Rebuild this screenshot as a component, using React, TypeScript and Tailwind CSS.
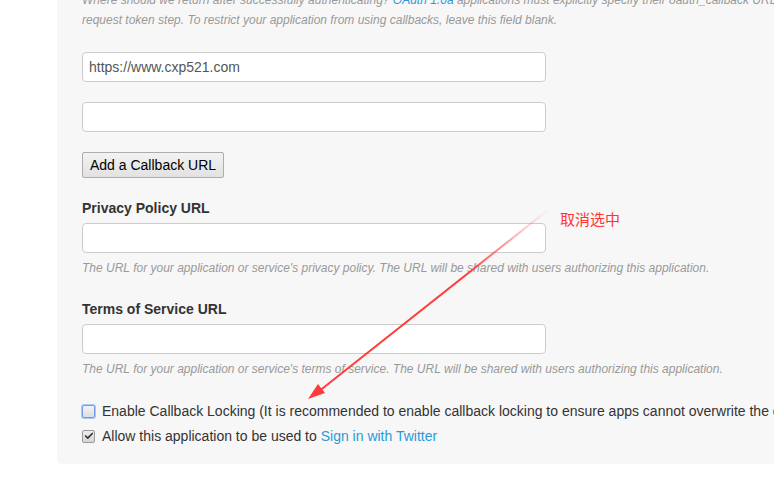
import { Check } from "lucide-react";

const font = { fontFamily: '"Liberation Sans", Arial, sans-serif' };

function Field({ value }: { value?: string }) {
  return (
    <div className="w-[464px] h-[30px] bg-white border border-[#cccccc] rounded-[4px] px-[6px] flex items-center text-[14px] text-[#555555]">
      {value}
    </div>
  );
}

function Help({ children }: { children: React.ReactNode }) {
  return <p className="text-[12px] leading-[20px] italic text-[#999999] whitespace-nowrap">{children}</p>;
}

export default function App() {
  return (
    <div style={font} className="relative w-[774px] h-[489px] overflow-hidden bg-white">
      <div className="ml-[57px] w-[760px] h-[464px] bg-[#f7f7f7] rounded-bl-[5px] pl-[25px] flex flex-col">
        <div className="-mt-[10px]">
          <Help>
            Where should we return after successfully authenticating?{" "}
            <span className="text-[#2a9ad6]">OAuth 1.0a</span> applications must explicitly specify their
            oauth_callback URL on the
          </Help>
          <Help>request token step. To restrict your application from using callbacks, leave this field blank.</Help>
        </div>

        <div className="mt-[22px] flex flex-col gap-[20px]">
          <Field value="https://www.cxp521.com" />
          <Field />
        </div>

        <button className="mt-[20px] self-start h-[26px] px-[7px] text-[14px] text-black border border-[#adadad] rounded-[2px] bg-gradient-to-b from-[#f2f2f2] to-[#e2e2e2]">
          Add a Callback URL
        </button>

        <label className="mt-[20px] text-[14px] font-bold text-[#333333] leading-[20px]">Privacy Policy URL</label>
        <div className="mt-[5px]">
          <Field />
        </div>
        <div className="mt-[5px]">
          <Help>
            The URL for your application or service's privacy policy. The URL will be shared with users authorizing
            this application.
          </Help>
        </div>

        <label className="mt-[21px] text-[14px] font-bold text-[#333333] leading-[20px]">Terms of Service URL</label>
        <div className="mt-[5px]">
          <Field />
        </div>
        <div className="mt-[5px]">
          <Help>
            The URL for your application or service's terms of service. The URL will be shared with users authorizing
            this application.
          </Help>
        </div>

        <div className="mt-[22px] flex flex-col gap-[5px] text-[14px] text-[#333333] whitespace-nowrap">
          <div className="flex items-center gap-[7px] h-[20px]">
            <span className="shrink-0 w-[13px] h-[13px] rounded-[2px] border border-[#6f9de8] shadow-[0_0_0_1px_#a9c6f5] bg-gradient-to-b from-[#f4f4f4] to-[#dedede]" />
            <span>
              Enable Callback Locking (It is recommended to enable callback locking to ensure apps cannot overwrite the
              callback url)
            </span>
          </div>
          <div className="flex items-center gap-[7px] h-[20px]">
            <span className="shrink-0 w-[13px] h-[13px] rounded-[2px] border border-[#9a9a9a] bg-gradient-to-b from-[#ededed] to-[#d6d6d6] flex items-center justify-center">
              <Check size={10} strokeWidth={4} className="text-[#333333]" />
            </span>
            <span>
              Allow this application to be used to <span className="text-[#2a9ad6]">Sign in with Twitter</span>
            </span>
          </div>
        </div>
      </div>

      <span
        className="absolute left-[560px] top-[209px] text-[15px] leading-[20px] text-[#ff3333]"
        style={{ fontFamily: '"Noto Sans CJK SC", sans-serif' }}
      >
        取消选中
      </span>

      <svg className="absolute left-0 top-0 pointer-events-none" width="774" height="489">
        <defs>
          <linearGradient id="fade" x1="548" y1="210" x2="310" y2="398" gradientUnits="userSpaceOnUse">
            <stop offset="0" stopColor="#ff3b3b" stopOpacity="0" />
            <stop offset="0.35" stopColor="#ff3b3b" stopOpacity="1" />
            <stop offset="1" stopColor="#ff3b3b" stopOpacity="1" />
          </linearGradient>
        </defs>
        <line x1="548" y1="210" x2="318" y2="392" stroke="url(#fade)" strokeWidth="2" />
        <polygon points="308,399 318,384 325,393" fill="#ff3b3b" />
      </svg>
    </div>
  );
}
